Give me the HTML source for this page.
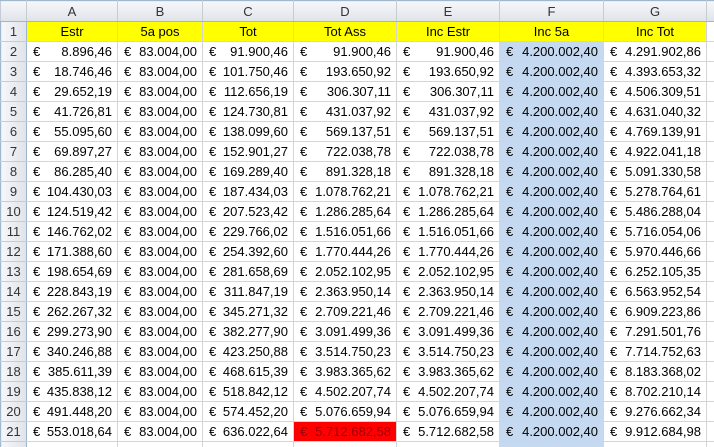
<!DOCTYPE html>
<html><head><meta charset="utf-8"><style>
html,body{margin:0;padding:0;background:#fff;width:714px;height:447px;overflow:hidden}
table{border-collapse:collapse;table-layout:fixed;width:726px;font-family:"Liberation Sans",Arial,sans-serif;font-size:13px;color:#000}
td{border:1px solid #d4d4d4;height:19px;padding:0;white-space:nowrap;overflow:hidden;line-height:19px}
tr.h td{height:20px;background:linear-gradient(#f6f7f9,#dfe3e8);border-color:#9eb6ce #c5ccd6;text-align:center;color:#333}
td.r{background:linear-gradient(90deg,#f6f7f9,#dfe3e8);text-align:center;color:#333;border-color:#c5ccd6 #9eb6ce}
td.c{background:#dfe3e8}
tr.y td.v{background:#ffff00;text-align:center}
td.v span{float:left;padding-left:6px}
td.v b{font-weight:normal;float:right;padding-right:5px}
td.f{background:#c5d9f1}
td.red{background:#ff0000;color:#9c0006}
</style></head><body>
<table>
<colgroup><col style="width:26px"><col style="width:91px"><col style="width:85px"><col style="width:91px"><col style="width:103px"><col style="width:103px"><col style="width:104px"><col style="width:103px"><col style="width:20px"></colgroup>
<tr class="h"><td class="c"></td><td>A</td><td>B</td><td>C</td><td>D</td><td>E</td><td>F</td><td>G</td><td></td></tr>
<tr class="y"><td class="r">1</td><td class="v">Estr</td><td class="v">5a pos</td><td class="v">Tot</td><td class="v">Tot Ass</td><td class="v">Inc Estr</td><td class="v">Inc 5a</td><td class="v">Inc Tot</td><td></td></tr>
<tr><td class="r">2</td><td class="v"><span>€</span><b>8.896,46</b></td><td class="v"><span>€</span><b>83.004,00</b></td><td class="v"><span>€</span><b>91.900,46</b></td><td class="v"><span>€</span><b>91.900,46</b></td><td class="v"><span>€</span><b>91.900,46</b></td><td class="v f"><span>€</span><b>4.200.002,40</b></td><td class="v"><span>€</span><b>4.291.902,86</b></td><td></td></tr>
<tr><td class="r">3</td><td class="v"><span>€</span><b>18.746,46</b></td><td class="v"><span>€</span><b>83.004,00</b></td><td class="v"><span>€</span><b>101.750,46</b></td><td class="v"><span>€</span><b>193.650,92</b></td><td class="v"><span>€</span><b>193.650,92</b></td><td class="v f"><span>€</span><b>4.200.002,40</b></td><td class="v"><span>€</span><b>4.393.653,32</b></td><td></td></tr>
<tr><td class="r">4</td><td class="v"><span>€</span><b>29.652,19</b></td><td class="v"><span>€</span><b>83.004,00</b></td><td class="v"><span>€</span><b>112.656,19</b></td><td class="v"><span>€</span><b>306.307,11</b></td><td class="v"><span>€</span><b>306.307,11</b></td><td class="v f"><span>€</span><b>4.200.002,40</b></td><td class="v"><span>€</span><b>4.506.309,51</b></td><td></td></tr>
<tr><td class="r">5</td><td class="v"><span>€</span><b>41.726,81</b></td><td class="v"><span>€</span><b>83.004,00</b></td><td class="v"><span>€</span><b>124.730,81</b></td><td class="v"><span>€</span><b>431.037,92</b></td><td class="v"><span>€</span><b>431.037,92</b></td><td class="v f"><span>€</span><b>4.200.002,40</b></td><td class="v"><span>€</span><b>4.631.040,32</b></td><td></td></tr>
<tr><td class="r">6</td><td class="v"><span>€</span><b>55.095,60</b></td><td class="v"><span>€</span><b>83.004,00</b></td><td class="v"><span>€</span><b>138.099,60</b></td><td class="v"><span>€</span><b>569.137,51</b></td><td class="v"><span>€</span><b>569.137,51</b></td><td class="v f"><span>€</span><b>4.200.002,40</b></td><td class="v"><span>€</span><b>4.769.139,91</b></td><td></td></tr>
<tr><td class="r">7</td><td class="v"><span>€</span><b>69.897,27</b></td><td class="v"><span>€</span><b>83.004,00</b></td><td class="v"><span>€</span><b>152.901,27</b></td><td class="v"><span>€</span><b>722.038,78</b></td><td class="v"><span>€</span><b>722.038,78</b></td><td class="v f"><span>€</span><b>4.200.002,40</b></td><td class="v"><span>€</span><b>4.922.041,18</b></td><td></td></tr>
<tr><td class="r">8</td><td class="v"><span>€</span><b>86.285,40</b></td><td class="v"><span>€</span><b>83.004,00</b></td><td class="v"><span>€</span><b>169.289,40</b></td><td class="v"><span>€</span><b>891.328,18</b></td><td class="v"><span>€</span><b>891.328,18</b></td><td class="v f"><span>€</span><b>4.200.002,40</b></td><td class="v"><span>€</span><b>5.091.330,58</b></td><td></td></tr>
<tr><td class="r">9</td><td class="v"><span>€</span><b>104.430,03</b></td><td class="v"><span>€</span><b>83.004,00</b></td><td class="v"><span>€</span><b>187.434,03</b></td><td class="v"><span>€</span><b>1.078.762,21</b></td><td class="v"><span>€</span><b>1.078.762,21</b></td><td class="v f"><span>€</span><b>4.200.002,40</b></td><td class="v"><span>€</span><b>5.278.764,61</b></td><td></td></tr>
<tr><td class="r">10</td><td class="v"><span>€</span><b>124.519,42</b></td><td class="v"><span>€</span><b>83.004,00</b></td><td class="v"><span>€</span><b>207.523,42</b></td><td class="v"><span>€</span><b>1.286.285,64</b></td><td class="v"><span>€</span><b>1.286.285,64</b></td><td class="v f"><span>€</span><b>4.200.002,40</b></td><td class="v"><span>€</span><b>5.486.288,04</b></td><td></td></tr>
<tr><td class="r">11</td><td class="v"><span>€</span><b>146.762,02</b></td><td class="v"><span>€</span><b>83.004,00</b></td><td class="v"><span>€</span><b>229.766,02</b></td><td class="v"><span>€</span><b>1.516.051,66</b></td><td class="v"><span>€</span><b>1.516.051,66</b></td><td class="v f"><span>€</span><b>4.200.002,40</b></td><td class="v"><span>€</span><b>5.716.054,06</b></td><td></td></tr>
<tr><td class="r">12</td><td class="v"><span>€</span><b>171.388,60</b></td><td class="v"><span>€</span><b>83.004,00</b></td><td class="v"><span>€</span><b>254.392,60</b></td><td class="v"><span>€</span><b>1.770.444,26</b></td><td class="v"><span>€</span><b>1.770.444,26</b></td><td class="v f"><span>€</span><b>4.200.002,40</b></td><td class="v"><span>€</span><b>5.970.446,66</b></td><td></td></tr>
<tr><td class="r">13</td><td class="v"><span>€</span><b>198.654,69</b></td><td class="v"><span>€</span><b>83.004,00</b></td><td class="v"><span>€</span><b>281.658,69</b></td><td class="v"><span>€</span><b>2.052.102,95</b></td><td class="v"><span>€</span><b>2.052.102,95</b></td><td class="v f"><span>€</span><b>4.200.002,40</b></td><td class="v"><span>€</span><b>6.252.105,35</b></td><td></td></tr>
<tr><td class="r">14</td><td class="v"><span>€</span><b>228.843,19</b></td><td class="v"><span>€</span><b>83.004,00</b></td><td class="v"><span>€</span><b>311.847,19</b></td><td class="v"><span>€</span><b>2.363.950,14</b></td><td class="v"><span>€</span><b>2.363.950,14</b></td><td class="v f"><span>€</span><b>4.200.002,40</b></td><td class="v"><span>€</span><b>6.563.952,54</b></td><td></td></tr>
<tr><td class="r">15</td><td class="v"><span>€</span><b>262.267,32</b></td><td class="v"><span>€</span><b>83.004,00</b></td><td class="v"><span>€</span><b>345.271,32</b></td><td class="v"><span>€</span><b>2.709.221,46</b></td><td class="v"><span>€</span><b>2.709.221,46</b></td><td class="v f"><span>€</span><b>4.200.002,40</b></td><td class="v"><span>€</span><b>6.909.223,86</b></td><td></td></tr>
<tr><td class="r">16</td><td class="v"><span>€</span><b>299.273,90</b></td><td class="v"><span>€</span><b>83.004,00</b></td><td class="v"><span>€</span><b>382.277,90</b></td><td class="v"><span>€</span><b>3.091.499,36</b></td><td class="v"><span>€</span><b>3.091.499,36</b></td><td class="v f"><span>€</span><b>4.200.002,40</b></td><td class="v"><span>€</span><b>7.291.501,76</b></td><td></td></tr>
<tr><td class="r">17</td><td class="v"><span>€</span><b>340.246,88</b></td><td class="v"><span>€</span><b>83.004,00</b></td><td class="v"><span>€</span><b>423.250,88</b></td><td class="v"><span>€</span><b>3.514.750,23</b></td><td class="v"><span>€</span><b>3.514.750,23</b></td><td class="v f"><span>€</span><b>4.200.002,40</b></td><td class="v"><span>€</span><b>7.714.752,63</b></td><td></td></tr>
<tr><td class="r">18</td><td class="v"><span>€</span><b>385.611,39</b></td><td class="v"><span>€</span><b>83.004,00</b></td><td class="v"><span>€</span><b>468.615,39</b></td><td class="v"><span>€</span><b>3.983.365,62</b></td><td class="v"><span>€</span><b>3.983.365,62</b></td><td class="v f"><span>€</span><b>4.200.002,40</b></td><td class="v"><span>€</span><b>8.183.368,02</b></td><td></td></tr>
<tr><td class="r">19</td><td class="v"><span>€</span><b>435.838,12</b></td><td class="v"><span>€</span><b>83.004,00</b></td><td class="v"><span>€</span><b>518.842,12</b></td><td class="v"><span>€</span><b>4.502.207,74</b></td><td class="v"><span>€</span><b>4.502.207,74</b></td><td class="v f"><span>€</span><b>4.200.002,40</b></td><td class="v"><span>€</span><b>8.702.210,14</b></td><td></td></tr>
<tr><td class="r">20</td><td class="v"><span>€</span><b>491.448,20</b></td><td class="v"><span>€</span><b>83.004,00</b></td><td class="v"><span>€</span><b>574.452,20</b></td><td class="v"><span>€</span><b>5.076.659,94</b></td><td class="v"><span>€</span><b>5.076.659,94</b></td><td class="v f"><span>€</span><b>4.200.002,40</b></td><td class="v"><span>€</span><b>9.276.662,34</b></td><td></td></tr>
<tr><td class="r">21</td><td class="v"><span>€</span><b>553.018,64</b></td><td class="v"><span>€</span><b>83.004,00</b></td><td class="v"><span>€</span><b>636.022,64</b></td><td class="v red"><span>€</span><b>5.712.682,58</b></td><td class="v"><span>€</span><b>5.712.682,58</b></td><td class="v f"><span>€</span><b>4.200.002,40</b></td><td class="v"><span>€</span><b>9.912.684,98</b></td><td></td></tr>
<tr><td class="r">22</td><td></td><td></td><td></td><td></td><td></td><td class="f"></td><td></td><td></td></tr>
</table>
</body></html>
